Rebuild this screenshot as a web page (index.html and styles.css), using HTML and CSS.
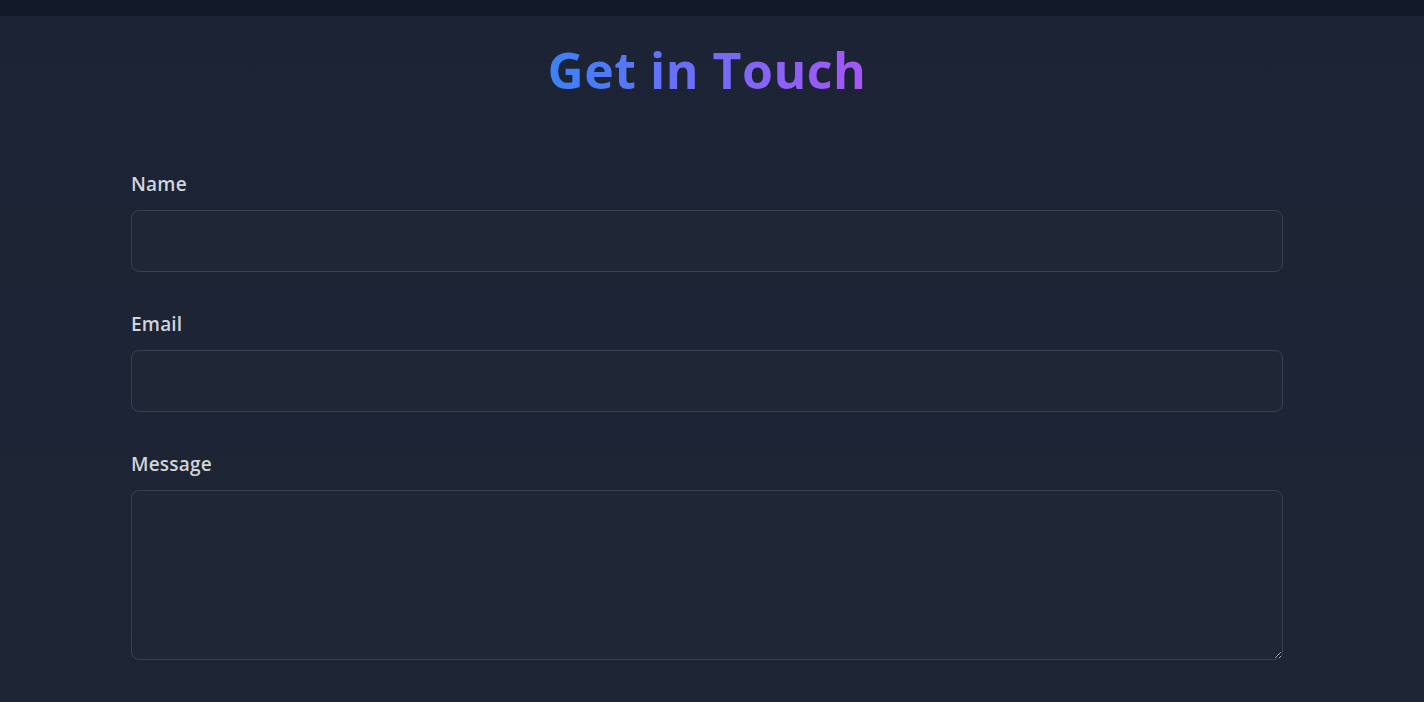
FILE: index.html
```html
<!DOCTYPE html>
<html lang="en">
<head>
<meta charset="utf-8">
<title>Get in Touch</title>
<link rel="stylesheet" href="styles.css">
</head>
<body>
<div class="topbar"></div>
<main class="page">
  <h1 class="title">Get in Touch</h1>
  <form class="form">
    <div class="field">
      <label class="label" for="name">Name</label>
      <input class="input" id="name" type="text">
    </div>
    <div class="field">
      <label class="label" for="email">Email</label>
      <input class="input" id="email" type="email">
    </div>
    <div class="field">
      <label class="label" for="message">Message</label>
      <textarea class="input textarea" id="message"></textarea>
    </div>
  </form>
</main>
</body>
</html>
```

FILE: styles.css
```css
* { box-sizing: border-box; }
html, body { margin: 0; padding: 0; }
body {
  background: linear-gradient(180deg, #1b2334 0%, #1e2636 100%);
  min-height: 702px;
  font-family: "Open Sans", "Noto Sans", sans-serif;
  overflow: hidden;
}
.topbar {
  height: 16px;
  background: #111827;
}
.page {
  display: flex;
  flex-direction: column;
  align-items: center;
  padding-right: 10px;
}
.title {
  margin: 22px 0 0;
  font-size: 50px;
  line-height: 64px;
  font-weight: 700;
  letter-spacing: 0.5px;
  background: linear-gradient(90deg, #3b82f6, #a855f7);
  -webkit-background-clip: text;
  background-clip: text;
  color: transparent;
}
.form {
  width: 1152px;
  margin-top: 68px;
  display: flex;
  flex-direction: column;
  gap: 38px;
}
.field {
  display: flex;
  flex-direction: column;
  gap: 12px;
}
.label {
  color: #d1d5db;
  font-size: 19px;
  line-height: 28px;
  font-weight: 600;
  letter-spacing: 0.2px;
}
.input {
  height: 62px;
  width: 100%;
  background: #1f2737;
  border: 1px solid #374151;
  border-radius: 8px;
  color: #e5e7eb;
  font-family: inherit;
  font-size: 16px;
  padding: 12px 16px;
  outline: none;
}
.textarea {
  height: 170px;
  resize: vertical;
  display: block;
}
```
